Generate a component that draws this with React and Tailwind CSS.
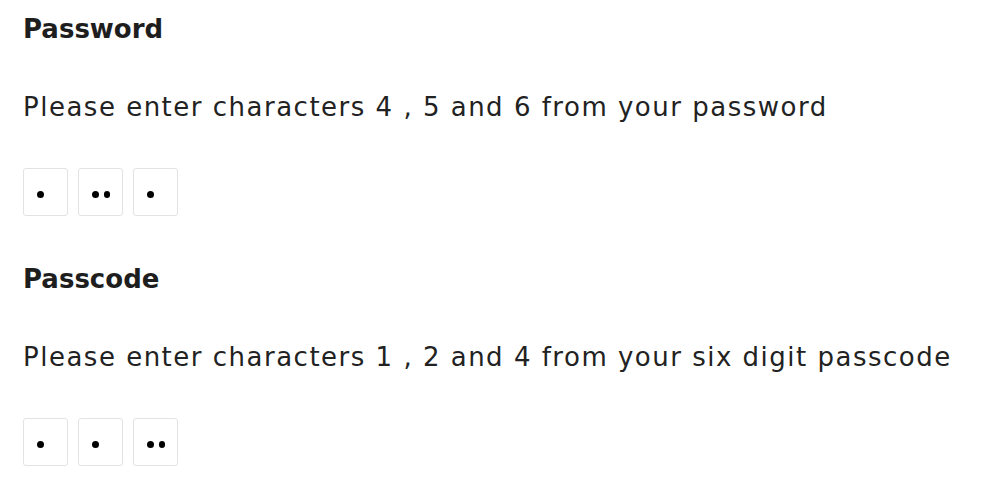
import React from "react";

function Dots({ count }) {
  return (
    <div className="w-[45px] h-[48px] border-[1.5px] border-[#e3e3e3] rounded-[3px] bg-white flex items-center gap-[5px] pl-[13px] pt-[5px]">
      {Array.from({ length: count }).map((_, i) => (
        <span key={i} className="block w-[6.5px] h-[6.5px] rounded-full bg-black" />
      ))}
    </div>
  );
}

function Section({ title, text, dots, first }) {
  return (
    <div className={first ? "" : "mt-[47px]"}>
      <h2 className="text-[26px] leading-[32px] font-bold text-[#1e1e1e]">{title}</h2>
      <p className="mt-[46px] text-[26px] leading-[32px] tracking-[1.5px] text-[#222]">{text}</p>
      <div className="mt-[45px] flex gap-[10px]">
        {dots.map((d, i) => (
          <Dots key={i} count={d} />
        ))}
      </div>
    </div>
  );
}

export default function App() {
  return (
    <div
      className="w-[990px] h-[486px] bg-white pt-[13px] pl-[23px]"
      style={{ fontFamily: '"DejaVu Sans", sans-serif' }}
    >
      <Section
        first
        title="Password"
        text="Please enter characters 4 , 5 and 6 from your password"
        dots={[1, 2, 1]}
      />
      <Section
        title="Passcode"
        text="Please enter characters 1 , 2 and 4 from your six digit passcode"
        dots={[1, 1, 2]}
      />
    </div>
  );
}
